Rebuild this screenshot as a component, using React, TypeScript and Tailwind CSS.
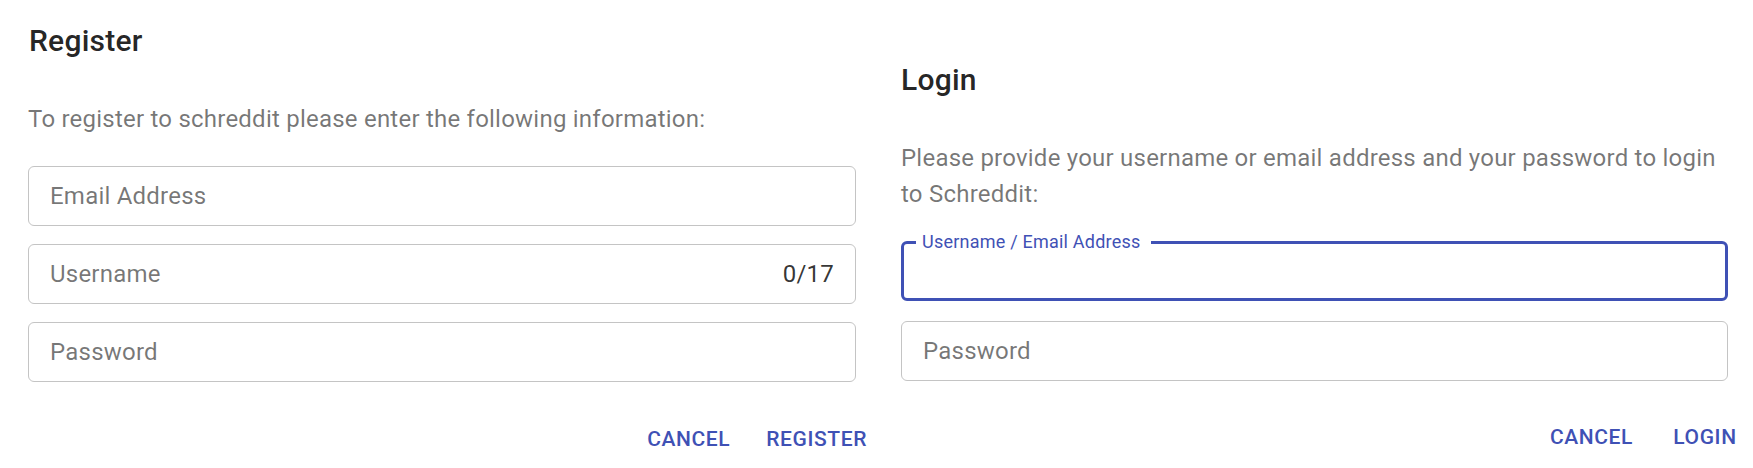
import React from "react";

const font = { fontFamily: "Roboto, 'Noto Sans', Arial, sans-serif" };

function OutlinedField({
  label,
  adornment,
}: {
  label: string;
  adornment?: string;
}) {
  return (
    <div className="h-[60px] rounded-[6px] border border-[#c4c4c4] flex items-center pl-[21px] pr-[21px]">
      <span className="flex-1 text-[24px] leading-[28px] tracking-[0.225px] text-[rgba(0,0,0,0.54)]">
        {label}
      </span>
      {adornment && (
        <span className="text-[24px] leading-[28px] tracking-[0.225px] text-[rgba(0,0,0,0.8)]">
          {adornment}
        </span>
      )}
    </div>
  );
}

function FocusedField({ label }: { label: string }) {
  return (
    <div className="relative h-[60px] rounded-[6px] border-[3px] border-[#3f51b5]">
      <span className="absolute top-[-11px] left-[12px] bg-white pl-[6px] pr-[10px] text-[18px] leading-[18px] tracking-[0.225px] text-[#3f51b5]">
        {label}
      </span>
    </div>
  );
}

function TextButton({ children }: { children: React.ReactNode }) {
  return (
    <button className="h-[55px] min-w-[96px] px-[12px] py-[9px] text-[21px] leading-[37px] font-medium tracking-[0.6px] uppercase text-[#3f51b5] rounded-[6px]">
      {children}
    </button>
  );
}

export default function App() {
  return (
    <div
      className="w-[1753px] h-[468px] bg-white overflow-hidden flex items-start"
      style={font}
    >
      <section className="ml-[28px] w-[828px] pt-[17px] flex flex-col">
        <h2 className="ml-[1px] text-[30px] leading-[48px] font-medium tracking-[0.225px] text-[rgba(0,0,0,0.87)]">
          Register
        </h2>
        <p className="mt-[36px] text-[24px] leading-[36px] tracking-[0.225px] text-[rgba(0,0,0,0.54)]">
          To register to schreddit please enter the following information:
        </p>
        <div className="mt-[29px] flex flex-col gap-[18px]">
          <OutlinedField label="Email Address" />
          <OutlinedField label="Username" adornment="0/17" />
          <OutlinedField label="Password" />
        </div>
        <div className="mt-[30px] -mr-[23px] flex justify-end gap-[12px]">
          <TextButton>Cancel</TextButton>
          <TextButton>Register</TextButton>
        </div>
      </section>

      <section className="ml-[45px] w-[827px] pt-[56px] flex flex-col">
        <h2 className="text-[30px] leading-[48px] font-medium tracking-[0.225px] text-[rgba(0,0,0,0.87)]">
          Login
        </h2>
        <p className="mt-[36px] text-[24px] leading-[36px] tracking-[0.225px] text-[rgba(0,0,0,0.54)]">
          Please provide your username or email address and your password to
          login to Schreddit:
        </p>
        <div className="mt-[29px] flex flex-col gap-[20px]">
          <FocusedField label="Username / Email Address" />
          <OutlinedField label="Password" />
        </div>
        <div className="mt-[29px] -mr-[25px] flex justify-end gap-[12px]">
          <TextButton>Cancel</TextButton>
          <TextButton>Login</TextButton>
        </div>
      </section>
    </div>
  );
}
